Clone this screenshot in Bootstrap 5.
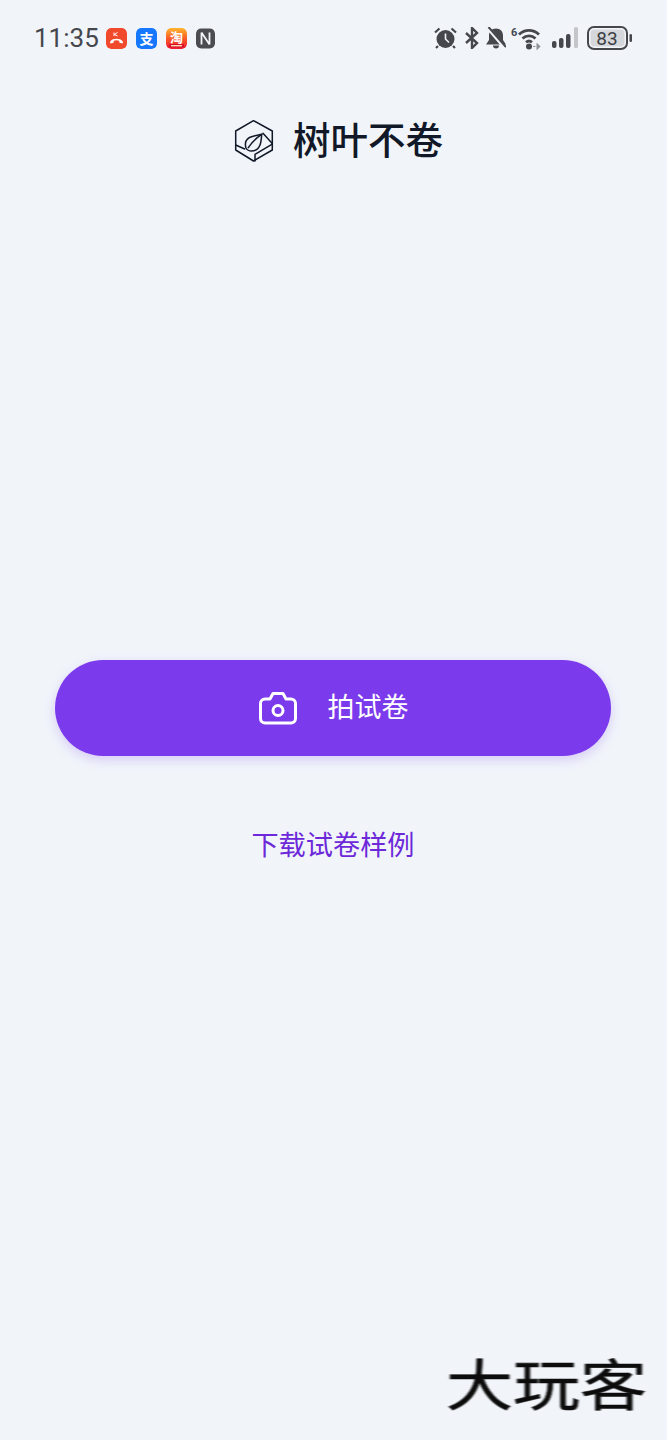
<!DOCTYPE html>
<html lang="zh">
<head>
<meta charset="utf-8">
<meta name="viewport" content="width=device-width, initial-scale=1">
<link rel="stylesheet" href="https://cdn.jsdelivr.net/npm/bootstrap@5.3.0/dist/css/bootstrap.min.css">
<style>
html,body{margin:0;background:#f1f5fa;}
.screen{width:667px;height:1440px;overflow:hidden;background:#f1f5fa;font-family:"Noto Sans CJK SC","Liberation Sans",sans-serif;}
.sbar{height:76px;padding:0 35px 0 34px;color:#45474d;}
.clock{font-family:Roboto,sans-serif;font-size:26px;line-height:1;color:#45474d;margin-right:8px;width:64px;white-space:nowrap;}
.nic{width:21px;height:21px;border-radius:5px;display:block;}
.nl{gap:9px;}
.sr svg{display:block;}
.apphead{height:130px;}
.brand{margin:42px 0 0 10px;}
.logo-i{margin-right:18px;}
.apptitle{font-size:37.5px;font-weight:500;line-height:1;color:#111827;margin:0;padding-bottom:6px;}
.mainzone{margin-top:454px;padding:0 56px 0 55px;}
.shoot{width:100%;height:96px;border:0;border-radius:48px;background:#7c3aed;color:#fff;font-size:27px;box-shadow:0 4px 12px rgba(124,58,237,.22);gap:30px;}
.shoot:hover,.shoot:active{background:#7c3aed!important;color:#fff!important;}
.shoot span{padding-bottom:4px;line-height:36px;}
.sample{margin-top:67px;display:block;text-align:center;color:#6d28d9;font-size:27.2px;line-height:40px;text-decoration:none;}
.wm{margin-top:auto;padding:0 20px 14px 0;font-size:67px;line-height:76px;color:#0c0c0c;font-weight:400;-webkit-text-stroke:.7px #0c0c0c;filter:blur(.8px);text-align:right;transform:scaleY(.82);transform-origin:100% 0;height:90px;}
</style>
</head>
<body>
<div class="screen d-flex flex-column">
  <div class="sbar d-flex align-items-center justify-content-between">
    <div class="d-flex align-items-center">
      <span class="clock">11:35</span>
      <div class="d-flex align-items-center nl">
        <svg class="nic" viewBox="0 0 21 21"><rect width="21" height="21" rx="5" fill="#f0492b"/><path d="M4 14c1-4.500 12-4.500 13 0l-.5 1.500-3-.7-.4-2c-2-.7-3.200-.7-5.200 0l-.4 2-3 .7z" fill="#fff"/><path d="M8 4.500v3.500M11.500 4.500l-3 2 3 1.500" stroke="#fff" stroke-width="1" fill="none"/></svg>
        <svg class="nic" viewBox="0 0 21 21"><rect width="21" height="21" rx="5" fill="#1678ff"/><text x="10.500" y="15.500" text-anchor="middle" font-size="14" font-weight="700" font-family="Noto Sans CJK SC,sans-serif" fill="#fff">支</text></svg>
        <svg class="nic" viewBox="0 0 21 21"><defs><linearGradient id="tb" x1="0" y1="0" x2="0" y2="1"><stop offset="0" stop-color="#ffb62e"/><stop offset=".5" stop-color="#fb5a26"/><stop offset="1" stop-color="#ee1b34"/></linearGradient></defs><rect width="21" height="21" rx="5" fill="url(#tb)"/><text x="10.500" y="14" text-anchor="middle" font-size="13" font-weight="700" font-family="Noto Sans CJK SC,sans-serif" fill="#fff">淘</text><rect x="3" y="16" width="15" height="3.500" rx="1" fill="#d80f2a"/><rect x="5" y="17" width="11" height="1.400" fill="#ffd9b0"/></svg>
        <svg class="nic" style="width:19px" viewBox="0 0 19 21"><rect x="0" y="0.500" width="19" height="20" rx="5" fill="#4a4c52"/><path d="M5.500 4.500v12M13.500 4.500v12M5.500 4.500l8 12" stroke="#f1f5fa" stroke-width="1.800" fill="none"/></svg>
      </div>
    </div>
    <div class="sr d-flex align-items-center">
      <svg width="23" height="22" viewBox="0 0 23 22" fill="#45474d"><circle cx="11.500" cy="12" r="9"/><path d="M11.500 6.500V12l3.500 3.500" stroke="#f1f5fa" stroke-width="1.600" fill="none"/><path d="M1 5.500L5.500 1.500M22 5.500L17.500 1.500M4 19l-2 2M19 19l2 2" stroke="#45474d" stroke-width="2.200"/></svg>
      <svg class="ms-2" width="14" height="22" viewBox="0 0 14 22" fill="none" stroke="#45474d" stroke-width="2.400"><path d="M1 6l11 10-5 5V1l5 5L1 16"/></svg>
      <svg style="margin-left:7px" width="20" height="22" viewBox="0 0 20 22" fill="#45474d"><path d="M10 1.500c4.500 0 7 3 7 7V13l3 4.500H0l3-4.500V8.500c0-4 2.500-7 7-7z"/><path d="M7 18.500h6a3 3 0 0 1-6 0z"/><path d="M1 0l18 21" stroke="#f1f5fa" stroke-width="3.600"/><path d="M2.500 0l17.500 20" stroke="#45474d" stroke-width="2"/></svg>
      <svg style="margin-left:5px" width="30" height="24" viewBox="0 0 30 24"><text x="0" y="10" font-family="Roboto,sans-serif" font-size="11" font-weight="700" fill="#45474d">6</text><g fill="none" stroke="#45474d" stroke-width="2.800"><path d="M8 8.500c6-5.500 14-5.500 20 0"/><path d="M11.500 12.500c3.800-3.600 9.200-3.600 13 0"/><path d="M15 16.200c2-1.700 4-1.700 6 0"/></g><circle cx="18" cy="20.500" r="3" fill="#45474d"/><path d="M22 20.500h2.500M26 17.500v6l3-3z" fill="#8d8f94" stroke="#8d8f94"/></svg>
      <svg style="margin-left:11px" width="26" height="22" viewBox="0 0 26 22"><rect x="0" y="14" width="4.500" height="7" rx="2" fill="#45474d"/><rect x="7" y="11" width="4.500" height="10" rx="2" fill="#45474d"/><rect x="14" y="7" width="4.500" height="14" rx="2" fill="#45474d"/><rect x="22" y="0" width="4" height="21" rx="1.500" fill="#c3c5c9"/></svg>
      <div class="d-flex align-items-center" style="margin-left:9px">
        <svg width="45" height="24" viewBox="0 0 45 24"><rect x="1" y="1" width="39" height="22" rx="6" fill="none" stroke="#45474d" stroke-width="2"/><rect x="3.500" y="3.500" width="34" height="17" rx="4" fill="#d5d7db"/><text x="20" y="18.500" text-anchor="middle" font-family="Roboto,sans-serif" font-size="19" fill="#3c3e44">83</text><rect x="42.500" y="8" width="2.500" height="8" rx="1.200" fill="#45474d"/></svg>
      </div>
    </div>
  </div>

  <header class="apphead d-flex align-items-start justify-content-center">
    <div class="brand d-flex align-items-center">
      <svg class="logo-i" width="41" height="46" viewBox="0 0 41 44" fill="none" stroke="#111827" stroke-width="1.500" stroke-linejoin="round" stroke-linecap="round"><path d="M19.500 1.700L38.300 12v19L19.500 42 1.700 31V12z"/><path d="M1.700 26l9 4M37.800 25.300L21 35.300V42M29 14.300l9 10"/><path d="M12 29c-1.500-5 0-8.500 3.500-10.500 4-2 8-2.300 12.200-3.200-.3 4.200-.5 7.700-1.700 10.700-1.500 3.600-5 6-8.300 6-2.500 0-4.700-1-5.700-3z"/><path d="M14.300 28.700C18 23 22 19 27.700 15.300"/></svg>
      <h1 class="apptitle">树叶不卷</h1>
    </div>
  </header>

  <main class="mainzone">
    <button type="button" class="btn shoot d-flex align-items-center justify-content-center">
      <svg width="40" height="34" viewBox="0 0 40 34" fill="none" stroke="#fff" stroke-width="3" stroke-linejoin="round"><path d="M7 8h5l3-5.500h10L28 8h5a4.500 4.500 0 0 1 4.500 4.500v15A4.500 4.500 0 0 1 33 32H7a4.500 4.500 0 0 1-4.500-4.500v-15A4.500 4.500 0 0 1 7 8z"/><circle cx="20" cy="19.500" r="5"/></svg>
      <span>拍试卷</span>
    </button>
    <a class="sample" href="#">下载试卷样例</a>
  </main>

  <div class="wm mt-auto">大玩客</div>
</div>
<script src="https://cdn.jsdelivr.net/npm/bootstrap@5.3.0/dist/js/bootstrap.bundle.min.js"></script>
</body>
</html>
